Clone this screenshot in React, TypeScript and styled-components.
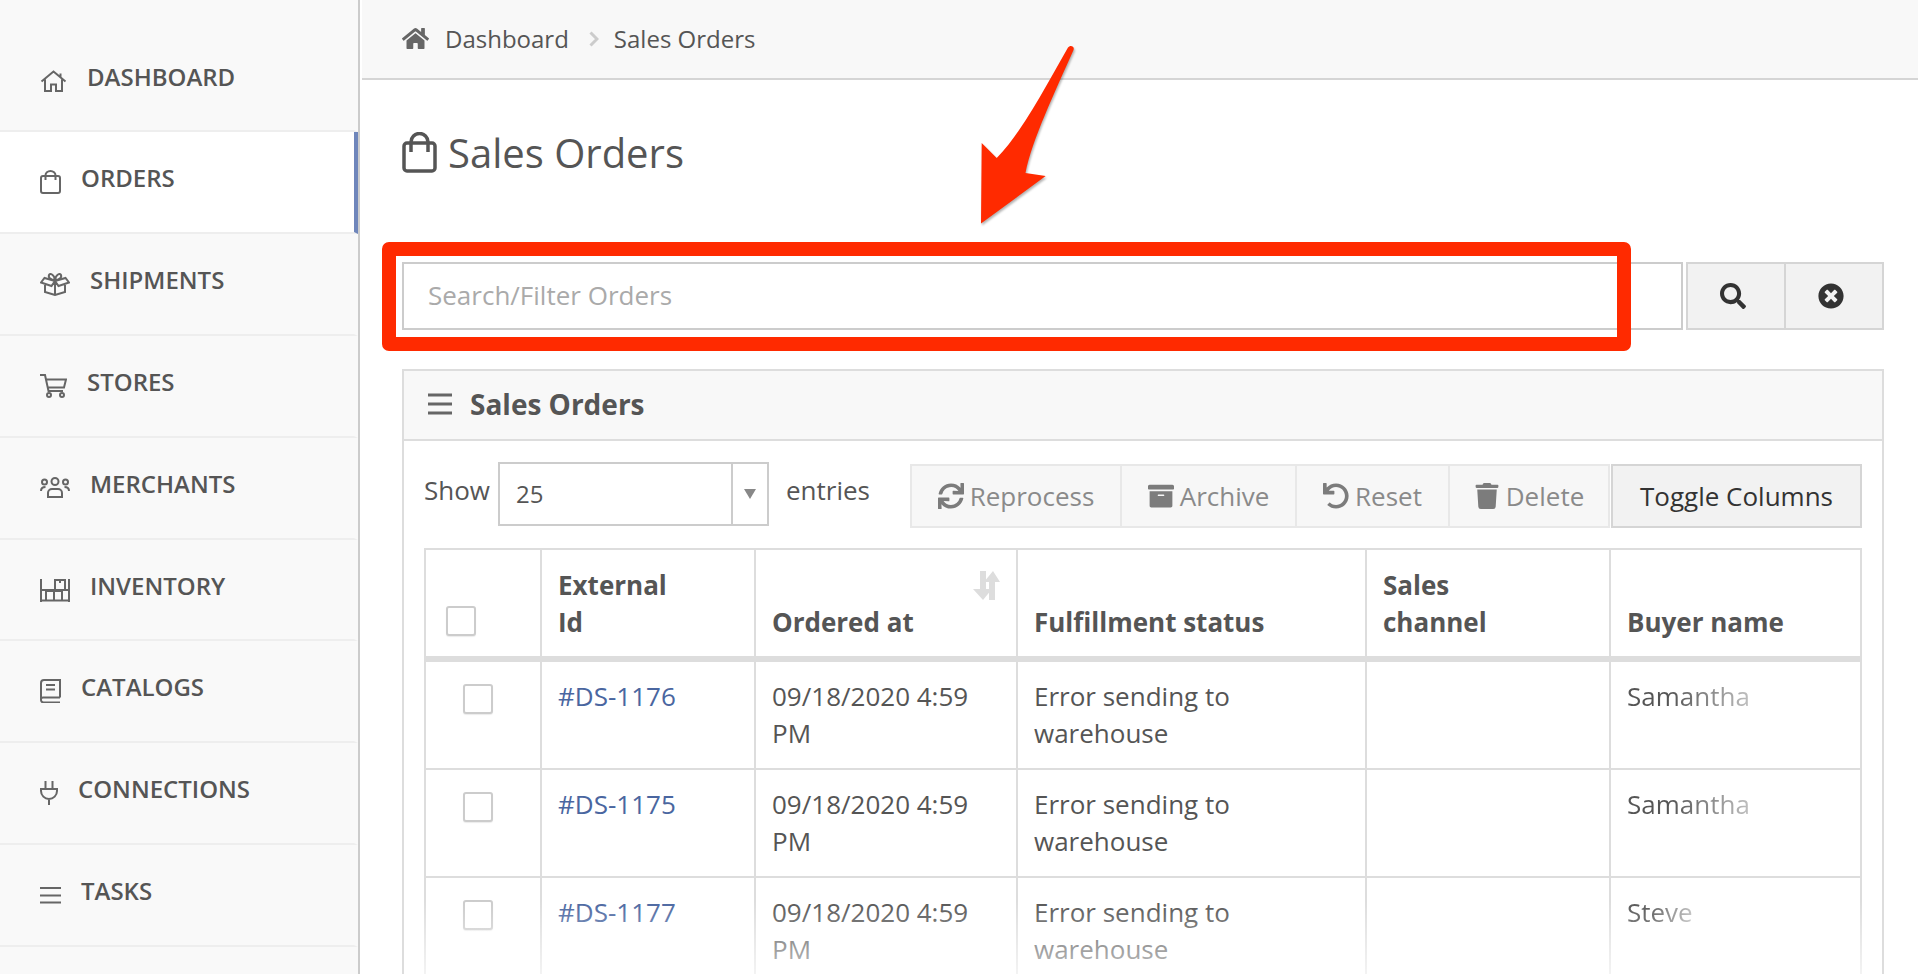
import React from 'react'
import styled, { createGlobalStyle } from 'styled-components'
import {
  FaArchive,
  FaHome,
  FaSearch,
  FaSync,
  FaTimesCircle,
  FaTrash,
  FaUndo,
} from 'react-icons/fa'

const GlobalStyle = createGlobalStyle`
  html, body {
    margin: 0;
    padding: 0;
    background: #fff;
  }
  * {
    box-sizing: border-box;
  }
`

const Page = styled.div`
  position: relative;
  display: flex;
  width: 1918px;
  height: 974px;
  overflow: hidden;
  font-family: 'Open Sans', 'Liberation Sans', sans-serif;
  color: #555;
  background: #fff;
`

const Sidebar = styled.nav`
  flex: 0 0 360px;
  background: #f9f9f9;
  border-right: 2px solid #ccc;
`

const NavRow = styled.div<{ $active?: boolean; $first?: boolean }>`
  display: flex;
  align-items: center;
  gap: 20px;
  height: ${({ $first }) => ($first ? '132px' : '101.9px')};
  padding: ${({ $first }) => ($first ? '31px 0 0 40px' : '0 0 0 40px')};
  background: ${({ $active }) => ($active ? '#fff' : 'transparent')};
  border-bottom: 2px solid #eee;
  border-right: 4px solid ${({ $active }) => ($active ? '#6f86bb' : 'transparent')};
  svg {
    flex: none;
    fill: none;
    stroke: #666;
    stroke-width: 2;
  }
`

const NavLabel = styled.span`
  font-size: 24px;
  font-weight: 600;
  color: #555;
  margin-top: -9px;
`

const Main = styled.main`
  flex: 1;
  min-width: 0;
  margin-left: 2px;
`

const Crumbs = styled.header`
  display: flex;
  align-items: center;
  height: 80px;
  padding: 0 0 2px 40px;
  background: #f8f8f8;
  border-bottom: 2px solid #d5d5d5;
  font-size: 24px;
  color: #555;
`

const CrumbHome = styled.span`
  display: flex;
  width: 43px;
  color: #666;
  font-size: 27px;
`

const CrumbArrow = styled.svg`
  width: 10px;
  height: 16px;
  margin: 2px 15px 0 20px;
  fill: none;
  stroke: #ccc;
  stroke-width: 3;
`

const Content = styled.div`
  padding: 0 34px 0 40px;
`

const TitleRow = styled.h1`
  display: flex;
  align-items: center;
  gap: 11px;
  height: 182px;
  margin: 0;
  padding-bottom: 37px;
  font-size: 40px;
  font-weight: 400;
  color: #555;
`

const SearchRow = styled.div`
  display: flex;
  height: 68px;
  gap: 3px;
`

const SearchInput = styled.input`
  flex: 1;
  min-width: 0;
  height: 68px;
  padding: 0 24px 2px;
  border: 2px solid #ccc;
  border-radius: 0;
  outline: none;
  font: 400 26px 'Open Sans', sans-serif;
  color: #555;
  &::placeholder {
    color: #aaa;
    opacity: 1;
  }
`

const SearchButtons = styled.div`
  display: flex;
  flex: 0 0 198px;
`

const SquareButton = styled.button`
  display: flex;
  flex: 1;
  align-items: center;
  justify-content: center;
  padding: 0 6px 0 0;
  background: #f2f2f2;
  border: 2px solid #d5d5d5;
  color: #333;
  font-size: 26px;
  & + & {
    margin-left: -2px;
  }
`

const Panel = styled.section`
  margin-top: 39px;
  border: 2px solid #ddd;
  border-bottom: 0;
  height: 700px;
`

const PanelHead = styled.div`
  display: flex;
  align-items: center;
  gap: 18px;
  height: 70px;
  padding: 0 0 2px 24px;
  background: #f8f8f8;
  border-bottom: 2px solid #ddd;
  font-size: 28px;
  font-weight: 700;
  color: #555;
`

const PanelBody = styled.div`
  padding: 21px 20px 0;
`

const Toolbar = styled.div`
  display: flex;
  align-items: flex-start;
  height: 86px;
`

const ToolbarText = styled.span`
  font-size: 26px;
  line-height: 57px;
  color: #555;
`

const EntrySelect = styled.div`
  display: flex;
  align-items: center;
  justify-content: space-between;
  width: 272px;
  height: 64px;
  margin: 0 17px 0 8px;
  padding: 0 0 2px 16px;
  border: 2px solid #ccc;
  font-size: 24px;
  color: #555;
`

const SelectCaret = styled.span`
  display: flex;
  align-items: center;
  justify-content: center;
  width: 36px;
  height: calc(100% + 2px);
  margin-bottom: -2px;
  border-left: 2px solid #ccc;
  &::after {
    content: '';
    border-left: 6px solid transparent;
    border-right: 6px solid transparent;
    border-top: 10px solid #888;
  }
`

const ButtonGroup = styled.div`
  display: flex;
  height: 64px;
  margin: 2px 0 0 40px;
`

const ActionButton = styled.button<{ $width: number; $enabled?: boolean }>`
  display: flex;
  align-items: center;
  justify-content: center;
  gap: 6px;
  width: ${({ $width }) => $width}px;
  padding: 0;
  margin-left: ${({ $enabled }) => ($enabled ? '1px' : '-2px')};
  background: ${({ $enabled }) => ($enabled ? '#f2f2f2' : '#f7f7f7')};
  border: 2px solid ${({ $enabled }) => ($enabled ? '#d5d5d5' : '#e8e8e8')};
  color: ${({ $enabled }) => ($enabled ? '#333' : '#8a8a8a')};
  font: 400 26px 'Open Sans', sans-serif;
  &:first-child {
    margin-left: 0;
  }
  svg {
    color: #7c7c7c;
    font-size: 26px;
  }
`

const OrdersTable = styled.table`
  width: 1436px;
  border-collapse: collapse;
  table-layout: fixed;
  font-size: 26px;
  line-height: 37px;
`

const HeadCell = styled.th<{ $width: number }>`
  position: relative;
  width: ${({ $width }) => $width}px;
  height: 110px;
  padding: 0 16px 15px;
  border: 2px solid #ddd;
  border-bottom-width: 6px;
  text-align: left;
  vertical-align: bottom;
  font-weight: 700;
  color: #555;
`

const BodyCell = styled.td`
  height: 108.4px;
  padding: 16px 16px;
  border: 2px solid #ddd;
  vertical-align: top;
  color: #555;
`

const CheckCell = styled(BodyCell)`
  padding: 22px 0 0 37px;
`

const HeadCheckCell = styled(HeadCell)`
  padding: 0 0 20px 20px;
`

const Check = styled.div`
  width: 30px;
  height: 30px;
  background: #fff;
  border: 2px solid #ccc;
  border-radius: 3px;
  box-shadow: 0 1px 1px rgba(0, 0, 0, 0.08);
`

const OrderLink = styled.a`
  color: #4a66a0;
`

const SortIcon = styled.svg`
  position: absolute;
  top: 21px;
  right: 16px;
  width: 27px;
  height: 29px;
  fill: #ddd;
`

const FadedName = styled.span`
  display: inline-block;
  background: linear-gradient(90deg, #555 35%, #c0c0c0 100%);
  -webkit-background-clip: text;
  background-clip: text;
  color: transparent;
`

const BottomFade = styled.div`
  position: absolute;
  left: 406px;
  right: 36px;
  bottom: 0;
  height: 74px;
  background: linear-gradient(rgba(255, 255, 255, 0), rgba(255, 255, 255, 0.65));
  pointer-events: none;
`

const Callout = styled.div`
  position: absolute;
  left: 382px;
  top: 242px;
  width: 1249px;
  height: 109px;
  border: 14px solid #ff2a00;
  border-radius: 7px;
  pointer-events: none;
`

const CalloutArrow = styled.svg`
  position: absolute;
  left: 960px;
  top: 30px;
  width: 125px;
  height: 205px;
  fill: #ff2a00;
  filter: drop-shadow(1px 2px 1px rgba(0, 0, 0, 0.3));
  pointer-events: none;
`

const HomeIcon = () => (
  <svg width="27" height="22" viewBox="0 0 26 22">
    <path d="M1 11.5 13 1.5l12 10M20 3.5V7M4.5 9.5V21h6v-6.5h5V21h6V9.5" />
  </svg>
)

const BagIcon = () => (
  <svg width="21" height="24" viewBox="0 0 21 24">
    <rect x="1" y="6" width="19" height="17" rx="2" />
    <path d="M5.500 10V5.500a5 4.500 0 0 1 10 0V10" />
  </svg>
)

const BoxIcon = () => (
  <svg width="30" height="24" viewBox="0 0 30 24">
    <path d="M5 11.500V20l10 3 10-3v-8.500M15 23V9M15 9 4.500 6 1 10.500 11.500 14 15 9l3.500 5L29 10.500 25.500 6 15 9" />
    <path d="M15 8c-4 0-7-2-6-5 1-2 5-1 6 5 1-6 5-7 6-5 1 3-2 5-6 5Z" />
  </svg>
)

const CartIcon = () => (
  <svg width="27" height="25" viewBox="0 0 27 25">
    <path d="M0 2h5l3.500 16h14.500M6 6.500h20l-2 8H7.500" />
    <circle cx="9" cy="22" r="2" />
    <circle cx="22" cy="22" r="2" />
  </svg>
)

const PeopleIcon = () => (
  <svg width="30" height="21" viewBox="0 0 30 21">
    <circle cx="15" cy="4.500" r="3.500" />
    <circle cx="4.500" cy="5" r="2.500" />
    <circle cx="25.500" cy="5" r="2.500" />
    <path d="M8 20v-4a4 4 0 0 1 4-4h6a4 4 0 0 1 4 4v4ZM1 14c0-3 2-4 4.500-4M29 14c0-3-2-4-4.500-4" />
  </svg>
)

const ShelfIcon = () => (
  <svg width="30" height="24" viewBox="0 0 30 24">
    <path d="M1 1v23M29 1v23M1 22.500h28M1 12h28M6 22V13h8v9M14 13h8v9M15 12V2h10v10M20 2v3" />
  </svg>
)

const BookIcon = () => (
  <svg width="21" height="24" viewBox="0 0 21 24">
    <path d="M20 18.500V1H4a3 3 0 0 0-3 3v17a2.500 2.500 0 0 0 2.500 2.500H20M1 20.500a2 2 0 0 1 2-2h17M6 6h9M6 10.500h9" />
  </svg>
)

const PlugIcon = () => (
  <svg width="18" height="24" viewBox="0 0 18 24">
    <path d="M5.500 0v8M12.500 0v8M1 8h16v2a8 8 0 0 1-16 0ZM9 18v6" />
  </svg>
)

const BarsIcon = () => (
  <svg width="21" height="18" viewBox="0 0 21 18">
    <path d="M0 2h21M0 9.500h21M0 16.500h21" />
  </svg>
)

const navItems = [
  { label: 'DASHBOARD', icon: <HomeIcon /> },
  { label: 'ORDERS', icon: <BagIcon />, active: true },
  { label: 'SHIPMENTS', icon: <BoxIcon /> },
  { label: 'STORES', icon: <CartIcon /> },
  { label: 'MERCHANTS', icon: <PeopleIcon /> },
  { label: 'INVENTORY', icon: <ShelfIcon /> },
  { label: 'CATALOGS', icon: <BookIcon /> },
  { label: 'CONNECTIONS', icon: <PlugIcon /> },
  { label: 'TASKS', icon: <BarsIcon /> },
]

const orders = [
  { id: '#DS-1176', buyer: 'Samantha' },
  { id: '#DS-1175', buyer: 'Samantha' },
  { id: '#DS-1177', buyer: 'Steve' },
]

function App() {
  return (
    <Page>
      <GlobalStyle />
      <Sidebar>
        {navItems.map((item, index) => (
          <NavRow key={item.label} $active={item.active} $first={index === 0}>
            {item.icon}
            <NavLabel>{item.label}</NavLabel>
          </NavRow>
        ))}
      </Sidebar>
      <Main>
        <Crumbs>
          <CrumbHome>
            <FaHome />
          </CrumbHome>
          Dashboard
          <CrumbArrow viewBox="0 0 10 16">
            <path d="M1.500 1.500 8 8l-6.500 6.500" />
          </CrumbArrow>
          Sales Orders
        </Crumbs>
        <Content>
          <TitleRow>
            <svg width="35" height="41" viewBox="0 0 35 41" fill="none" stroke="#555" strokeWidth="3.500">
              <rect x="2" y="11" width="31" height="28" rx="3" />
              <path d="M9 20V10a8.500 8.500 0 0 1 17 0v10" />
            </svg>
            Sales Orders
          </TitleRow>
          <SearchRow>
            <SearchInput placeholder="Search/Filter Orders" />
            <SearchButtons>
              <SquareButton>
                <FaSearch />
              </SquareButton>
              <SquareButton>
                <FaTimesCircle />
              </SquareButton>
            </SearchButtons>
          </SearchRow>
          <Panel>
            <PanelHead>
              <svg width="24" height="22" viewBox="0 0 24 22" fill="none" stroke="#666" strokeWidth="3">
                <path d="M0 2h24M0 11h24M0 20h24" />
              </svg>
              Sales Orders
            </PanelHead>
            <PanelBody>
              <Toolbar>
                <ToolbarText>Show</ToolbarText>
                <EntrySelect>
                  25
                  <SelectCaret />
                </EntrySelect>
                <ToolbarText>entries</ToolbarText>
                <ButtonGroup>
                  <ActionButton $width={212}>
                    <FaSync />
                    Reprocess
                  </ActionButton>
                  <ActionButton $width={177}>
                    <FaArchive />
                    Archive
                  </ActionButton>
                  <ActionButton $width={155}>
                    <FaUndo />
                    Reset
                  </ActionButton>
                  <ActionButton $width={162}>
                    <FaTrash />
                    Delete
                  </ActionButton>
                  <ActionButton $width={251} $enabled>
                    Toggle Columns
                  </ActionButton>
                </ButtonGroup>
              </Toolbar>
              <OrdersTable>
                <thead>
                  <tr>
                    <HeadCheckCell $width={116}>
                      <Check />
                    </HeadCheckCell>
                    <HeadCell $width={214}>
                      External
                      <br />
                      Id
                    </HeadCell>
                    <HeadCell $width={262}>
                      Ordered at
                      <SortIcon viewBox="0 0 27 29">
                        <path d="M7 0h6v18h6L10 29 0 18h7ZM20 0l7 11h-5v18h-6V11h-5Z" />
                      </SortIcon>
                    </HeadCell>
                    <HeadCell $width={349}>Fulfillment status</HeadCell>
                    <HeadCell $width={244}>
                      Sales
                      <br />
                      channel
                    </HeadCell>
                    <HeadCell $width={251}>Buyer name</HeadCell>
                  </tr>
                </thead>
                <tbody>
                  {orders.map((order) => (
                    <tr key={order.id}>
                      <CheckCell>
                        <Check />
                      </CheckCell>
                      <BodyCell>
                        <OrderLink>{order.id}</OrderLink>
                      </BodyCell>
                      <BodyCell>09/18/2020 4:59 PM</BodyCell>
                      <BodyCell>Error sending to warehouse</BodyCell>
                      <BodyCell />
                      <BodyCell>
                        <FadedName>{order.buyer}</FadedName>
                      </BodyCell>
                    </tr>
                  ))}
                </tbody>
              </OrdersTable>
            </PanelBody>
          </Panel>
        </Content>
      </Main>
      <BottomFade />
      <Callout />
      <CalloutArrow viewBox="960 30 125 205">
        <path d="M1068 47.500C1070 44.500 1075 46 1073.500 50C1055 92 1032 140 1025.500 173L1045.700 176L981 223.500L981.700 143L996.700 158C1020 135 1045 88 1068 47.500Z" />
      </CalloutArrow>
    </Page>
  )
}

export default App
